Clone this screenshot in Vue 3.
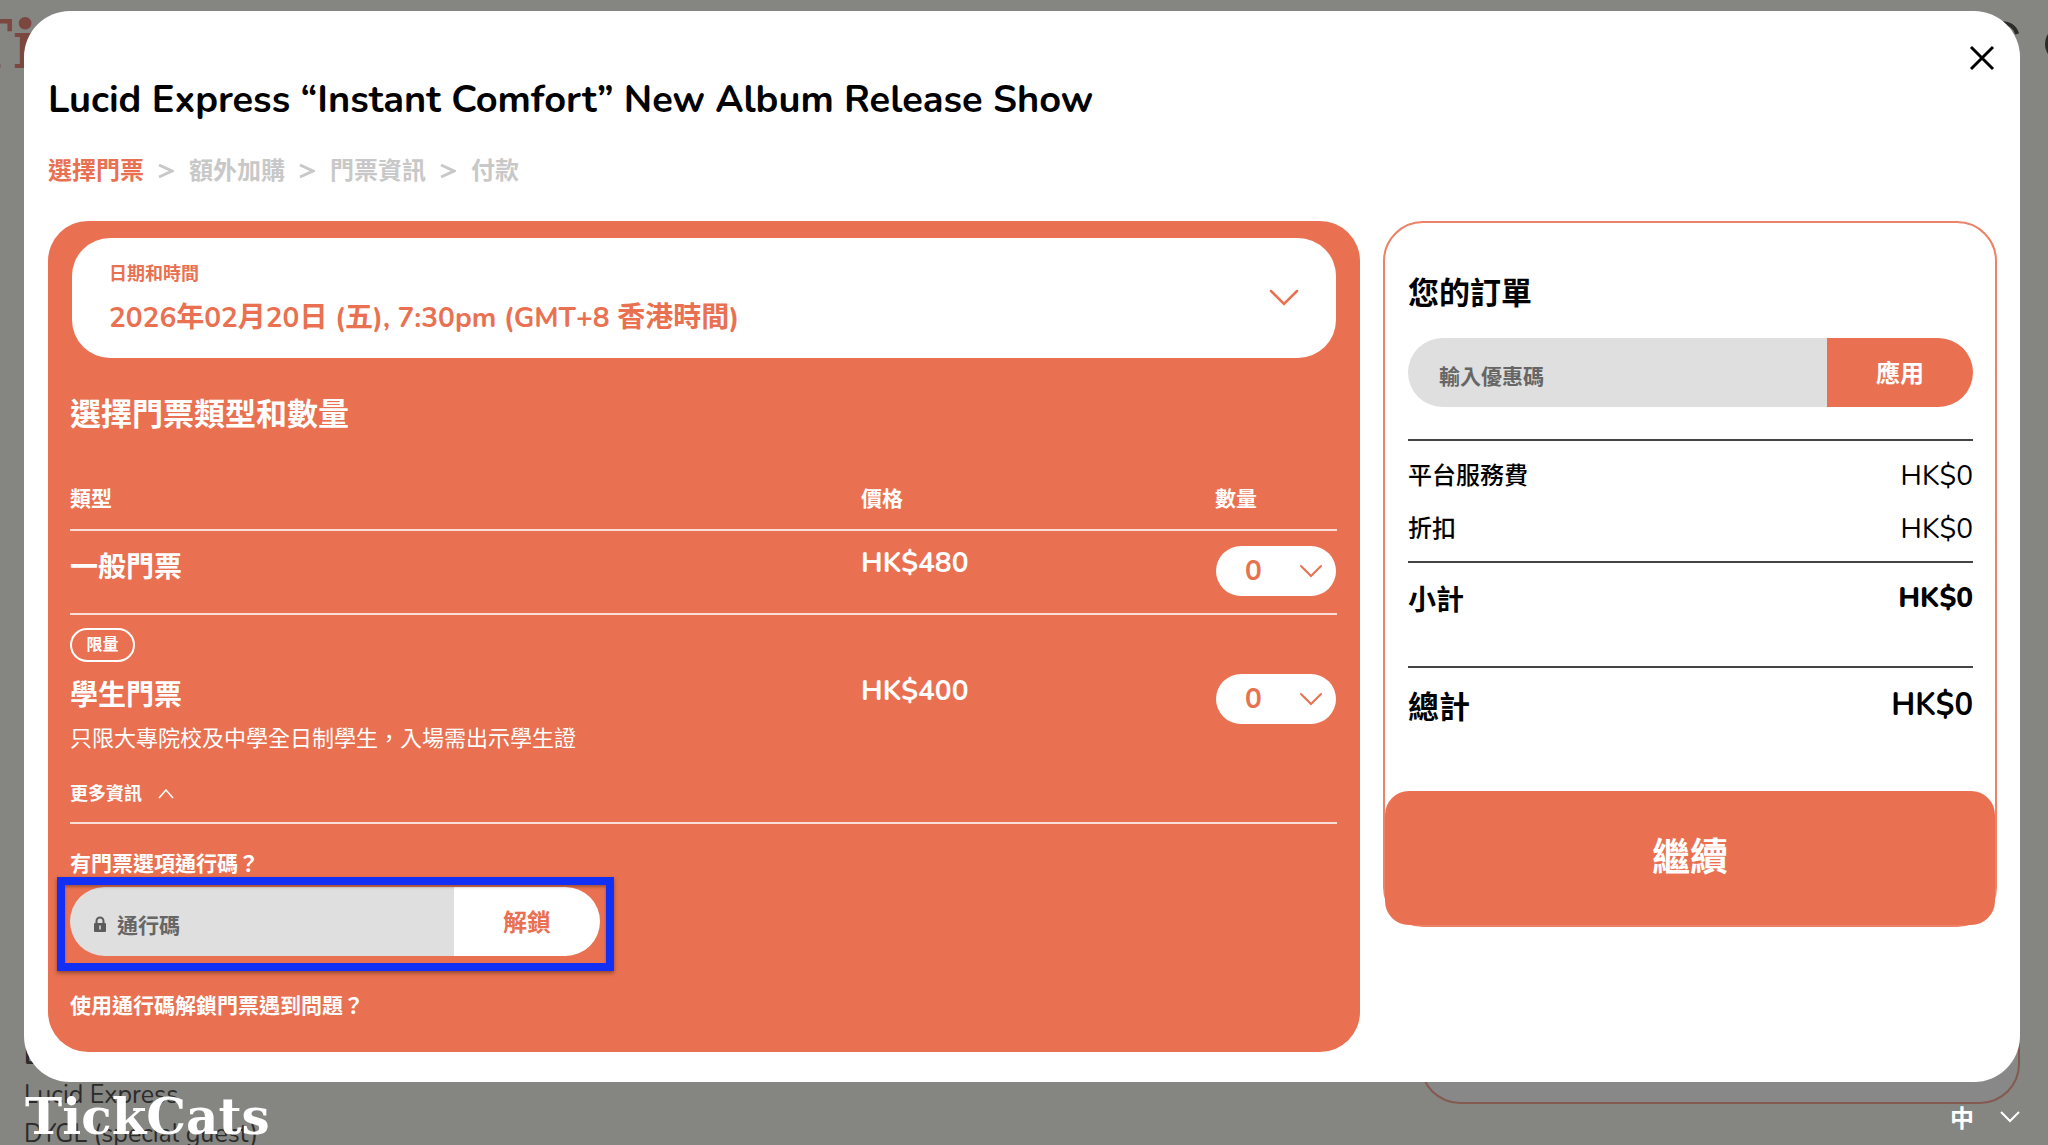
<script setup>
import { ref } from 'vue'

const steps = ['選擇門票', '額外加購', '門票資訊', '付款']
const tickets = ref([
  { id: 'general', name: '一般門票', price: 'HK$480', qty: 0 },
  {
    id: 'student',
    name: '學生門票',
    price: 'HK$400',
    qty: 0,
    badge: '限量',
    note: '只限大專院校及中學全日制學生，入場需出示學生證',
  },
])
const session = ref('2026年02月20日 (五), 7:30pm (GMT+8 香港時間)')
const promo = ref('')
const code = ref('')
</script>

<template>
  <div class="page">
    <!-- Dimmed event page behind the dialog -->
    <div class="behind" aria-hidden="true">
      <div class="behind-top">
        <span class="behind-logo">TickCats</span>
        <svg class="behind-icons" width="60" height="60" viewBox="0 0 60 60">
          <path d="M2 27a13 13 0 0 1 27 -6" fill="none" stroke="#2b2b2a" stroke-width="4" />
          <circle cx="75" cy="31" r="18" fill="#2b2b2a" />
        </svg>
      </div>
      <div class="behind-bottom">
        <div class="lineup">
          <strong>Line Up</strong>
          <span>Lucid Express</span>
          <span>DYGL (special guest)</span>
        </div>
        <div class="behind-card"></div>
      </div>
    </div>

    <main class="dialog" role="dialog" aria-labelledby="dialog-title">
      <button class="close" type="button" aria-label="關閉">
        <svg width="26" height="26" viewBox="0 0 26 26">
          <path d="M2 2L24 24M24 2L2 24" fill="none" stroke="#000" stroke-width="3" />
        </svg>
      </button>
      <h1 id="dialog-title">Lucid Express “Instant Comfort” New Album Release Show</h1>
      <ol class="steps">
        <li v-for="(step, i) in steps" :key="step" :class="{ active: i === 0 }">
          <svg v-if="i > 0" class="sep" width="16" height="16" viewBox="0 0 16 16">
            <path d="M1 2L14 8L1 14" fill="none" stroke="#c8c8c8" stroke-width="3" />
          </svg>
          {{ step }}
        </li>
      </ol>

      <div class="columns">
        <section class="tickets">
          <div class="date">
            <label for="session">日期和時間</label>
            <select id="session" v-model="session">
              <option>{{ session }}</option>
            </select>
            <svg class="date-arrow" width="30" height="18" viewBox="0 0 30 18">
              <path d="M2 2L15 15L28 2" fill="none" stroke="#e97151" stroke-width="2.5" stroke-linecap="round" />
            </svg>
          </div>

          <h2>選擇門票類型和數量</h2>
          <table>
            <thead>
              <tr>
                <th class="col-name">類型</th>
                <th class="col-price">價格</th>
                <th class="col-qty">數量</th>
              </tr>
            </thead>
            <tbody>
              <tr v-for="t in tickets" :key="t.id" :class="{ limited: t.badge }">
                <td>
                  <span v-if="t.badge" class="badge">{{ t.badge }}</span>
                  <div class="name">{{ t.name }}</div>
                  <template v-if="t.note">
                    <p class="note">{{ t.note }}</p>
                    <button class="more" type="button">
                      更多資訊
                      <svg width="16" height="10" viewBox="0 0 16 10">
                        <path d="M1 9L8 1L15 9" fill="none" stroke="#fff" stroke-width="1.5" />
                      </svg>
                    </button>
                  </template>
                </td>
                <td class="price">{{ t.price }}</td>
                <td>
                  <div class="qty">
                    <select v-model="t.qty" :aria-label="t.name + ' 數量'">
                      <option v-for="n in 5" :key="n" :value="n - 1">{{ n - 1 }}</option>
                    </select>
                    <svg class="qty-arrow" width="24" height="14" viewBox="0 0 24 14">
                      <path d="M2 2L12 12L22 2" fill="none" stroke="#e97151" stroke-width="2" stroke-linecap="round" />
                    </svg>
                  </div>
                </td>
              </tr>
            </tbody>
          </table>

          <label class="code-label" for="code">有門票選項通行碼？</label>
          <form class="field code" @submit.prevent>
            <svg class="lock" width="14" height="17" viewBox="0 0 14 17">
              <path d="M3.5 8V5a3.5 3.5 0 0 1 7 0v3" fill="none" stroke="#5c5c5c" stroke-width="2" />
              <rect x="1" y="7" width="12" height="9" rx="1" fill="#5c5c5c" />
              <path d="M7 9.500V13.500" stroke="#dfdfdf" stroke-width="1.500" />
            </svg>
            <input id="code" v-model="code" type="text" placeholder="通行碼" />
            <button type="submit">解鎖</button>
          </form>
          <a class="help" href="#help">使用通行碼解鎖門票遇到問題？</a>
        </section>

        <aside class="order">
          <div class="order-body">
            <h2>您的訂單</h2>
            <form class="field promo" @submit.prevent>
              <input v-model="promo" type="text" placeholder="輸入優惠碼" aria-label="輸入優惠碼" />
              <button type="submit">應用</button>
            </form>
            <dl class="fees">
              <div><dt>平台服務費</dt><dd>HK$0</dd></div>
              <div><dt>折扣</dt><dd>HK$0</dd></div>
            </dl>
            <dl class="subtotal">
              <div><dt>小計</dt><dd>HK$0</dd></div>
            </dl>
            <dl class="total">
              <div><dt>總計</dt><dd>HK$0</dd></div>
            </dl>
          </div>
          <button class="continue" type="button">繼續</button>
        </aside>
      </div>
    </main>

    <footer class="bar">
      <a class="logo" href="#home">TickCats</a>
      <button class="lang" type="button" aria-label="語言">
        中
        <svg width="20" height="12" viewBox="0 0 20 12">
          <path d="M1 1L10 10L19 1" fill="none" stroke="#fff" stroke-width="2" />
        </svg>
      </button>
    </footer>
  </div>
</template>

<style>
body {
  margin: 0;
  background: #858582;
  overflow: hidden;
}
</style>

<style scoped>
.page {
  position: relative;
  height: 100vh;
  overflow: hidden;
  color: #000;
  font-family: Nunito, "Noto Sans", "Noto Sans CJK TC", sans-serif;
}
.page * {
  box-sizing: border-box;
}
h1, h2, p, ol, dl, dd {
  margin: 0;
  padding: 0;
}
button, input, select {
  margin: 0;
  border: 0;
  background: none;
  font-family: inherit;
}
select {
  appearance: none;
  outline: none;
}

/* Dimmed page */
.behind {
  position: absolute;
  inset: 0;
  display: flex;
  flex-direction: column;
  justify-content: space-between;
  color: #2b2b2a;
}
.behind-top {
  display: flex;
  justify-content: space-between;
}
.behind-logo {
  margin-left: -38px;
  color: #7c473f;
  font: bold 68px/88px "DejaVu Serif", serif;
}
.behind-icons {
  margin-top: 13px;
}
.behind-bottom {
  display: flex;
  justify-content: space-between;
  align-items: flex-start;
  height: 108px;
}
.lineup {
  display: flex;
  flex-direction: column;
  padding-left: 24px;
  font-size: 25px;
  line-height: 39px;
}
.behind-card {
  width: 600px;
  height: 67px;
  margin-right: 28px;
  border: 2px solid #845a50;
  border-top: 0;
  border-radius: 0 0 40px 40px;
  background: #888;
}

/* Dialog */
.dialog {
  position: absolute;
  top: 11px;
  left: 24px;
  right: 28px;
  padding: 63px 23px 30px 24px;
  border-radius: 46px;
  background: #fff;
}
.close {
  position: absolute;
  top: 34px;
  right: 25px;
  display: flex;
  padding: 0;
}
h1 {
  font-size: 38px;
  font-weight: 700;
  line-height: 52px;
}
.steps {
  display: flex;
  gap: 14px;
  margin-top: 27px;
  list-style: none;
  color: #c8c8c8;
  font-size: 24px;
  font-weight: 700;
  line-height: 36px;
}
.steps li {
  display: flex;
  align-items: center;
  gap: 15px;
}
.steps .active {
  color: #e97151;
}
.columns {
  display: grid;
  grid-template-columns: 1312fr 614fr;
  align-items: start;
  gap: 23px;
  margin-top: 32px;
}
h2 {
  font-size: 31px;
  font-weight: 700;
  line-height: 44px;
}

/* Ticket panel */
.tickets {
  padding: 17px 23px 31px 22px;
  border-radius: 40px;
  background: #e97151;
  color: #fff;
}
.date {
  position: relative;
  display: flex;
  flex-direction: column;
  height: 120px;
  margin: 0 1px 0 2px;
  padding: 23px 37px 0;
  border-radius: 38px;
  background: #fff;
  color: #e97151;
}
.date label {
  font-size: 18px;
  font-weight: 700;
  line-height: 26px;
}
.date select {
  margin-top: 11px;
  padding: 0;
  color: #e97151;
  font-size: 28px;
  font-weight: 700;
  line-height: 40px;
}
.date-arrow {
  position: absolute;
  top: 51px;
  right: 37px;
  pointer-events: none;
}
.tickets h2 {
  margin-top: 35px;
}
table {
  width: 100%;
  border-collapse: separate;
  border-spacing: 0;
  table-layout: fixed;
}
th {
  height: 94px;
  padding: 0 0 15px;
  border-bottom: 2px solid #fadfd8;
  font-size: 21px;
  font-weight: 700;
  line-height: 30px;
  text-align: left;
  vertical-align: bottom;
}
.col-price {
  width: 354px;
}
.col-qty {
  width: 122px;
}
td {
  padding: 15px 0 17px;
  border-bottom: 2px solid #fadfd8;
  vertical-align: top;
}
td:first-child {
  padding-bottom: 0;
}
.limited td {
  padding: 59px 0 16px;
}
.limited td:first-child {
  padding-top: 13px;
}
.badge {
  display: block;
  width: 65px;
  height: 34px;
  margin-bottom: 12px;
  border: 2px solid #fff;
  border-radius: 17px;
  font-size: 16px;
  font-weight: 700;
  line-height: 30px;
  text-align: center;
}
.name {
  font-size: 28px;
  font-weight: 700;
  line-height: 44px;
}
.price {
  font-size: 28px;
  font-weight: 700;
  line-height: 34px;
}
.note {
  margin-top: 6px;
  font-size: 22px;
  line-height: 30px;
}
.more {
  display: flex;
  align-items: center;
  gap: 16px;
  margin-top: 28px;
  padding: 0;
  color: #fff;
  font-size: 18px;
  font-weight: 700;
  line-height: 24px;
}
.qty {
  position: relative;
  width: 120px;
  height: 50px;
  margin-left: 1px;
  border-radius: 25px;
  background: #fff;
}
.qty select {
  width: 100%;
  height: 50px;
  padding: 0 0 0 29px;
  color: #e97151;
  font-size: 28px;
  font-weight: 700;
}
.qty-arrow {
  position: absolute;
  top: 18px;
  right: 13px;
  pointer-events: none;
}
.code-label {
  display: block;
  margin-top: 25px;
  font-size: 21px;
  font-weight: 700;
  line-height: 30px;
}

/* Pill fields with an attached button */
.field {
  position: relative;
  display: flex;
  height: 69px;
}
.field input {
  flex: 1;
  min-width: 0;
  padding: 8px 0 0 31px;
  border-radius: 35px 0 0 35px;
  background: #dfdfdf;
  font-size: 21px;
  font-weight: 700;
  outline: none;
}
.field input::placeholder {
  color: #666;
  opacity: 1;
}
.field button {
  width: 146px;
  padding: 0 0 2px;
  border-radius: 0 35px 35px 0;
  background: #e97151;
  color: #fff;
  font-size: 24px;
  font-weight: 700;
}
.code {
  width: 530px;
  margin-top: 8px;
}
.code::after {
  content: "";
  position: absolute;
  inset: -10px -14px -15px -13px;
  border: 8px solid #1230f5;
  box-shadow: 0 2px 4px rgba(0, 0, 0, 0.4), inset 0 2px 3px rgba(0, 0, 0, 0.3);
  pointer-events: none;
}
.code input {
  padding-left: 47px;
}
.code button {
  background: #fff;
  color: #e97151;
}
.lock {
  position: absolute;
  top: 29px;
  left: 23px;
}
.help {
  display: block;
  margin-top: 35px;
  color: #fff;
  font-size: 21px;
  font-weight: 700;
  line-height: 30px;
  text-decoration: none;
}

/* Order summary */
.order {
  border: 2px solid #ec8267;
  border-radius: 40px;
  background: linear-gradient(#fff 600px, #e97151 600px);
}
.order-body {
  padding: 49px 22px 64px 23px;
}
.promo {
  margin: 22px 0 32px;
}
dl {
  border-top: 2px solid #444;
}
dl div {
  display: flex;
  justify-content: space-between;
}
.fees {
  display: flex;
  flex-direction: column;
  gap: 23px;
  padding: 20px 0 17px;
  font-size: 24px;
  line-height: 30px;
}
.fees dt {
  font-weight: 500;
}
.fees dd {
  font-size: 28px;
}
.subtotal {
  padding: 17px 0 46px;
  font-size: 28px;
  line-height: 40px;
}
.subtotal dt,
.total dt {
  padding-top: 2px;
  font-weight: 700;
  line-height: 38px;
}
.subtotal dd {
  font-weight: 800;
  line-height: 36px;
}
.total {
  padding-top: 19px;
  font-size: 31px;
  line-height: 40px;
}
.total dd {
  font-weight: 700;
  line-height: 36px;
}
.continue {
  display: block;
  width: 100%;
  height: 134px;
  padding: 0 0 8px;
  border-radius: 24px;
  background: #e97151;
  color: #fff;
  font-size: 38px;
  font-weight: 700;
}

/* Site bar */
.bar {
  position: absolute;
  left: 25px;
  right: 28px;
  bottom: 0;
  display: flex;
  justify-content: space-between;
  align-items: center;
  height: 57px;
}
.logo {
  color: #fff;
  font: bold 50px/56px "DejaVu Serif", serif;
  text-decoration: none;
}
.lang {
  display: flex;
  align-items: center;
  gap: 26px;
  padding: 0;
  color: #fff;
  font-size: 24px;
  font-weight: 700;
}
</style>
